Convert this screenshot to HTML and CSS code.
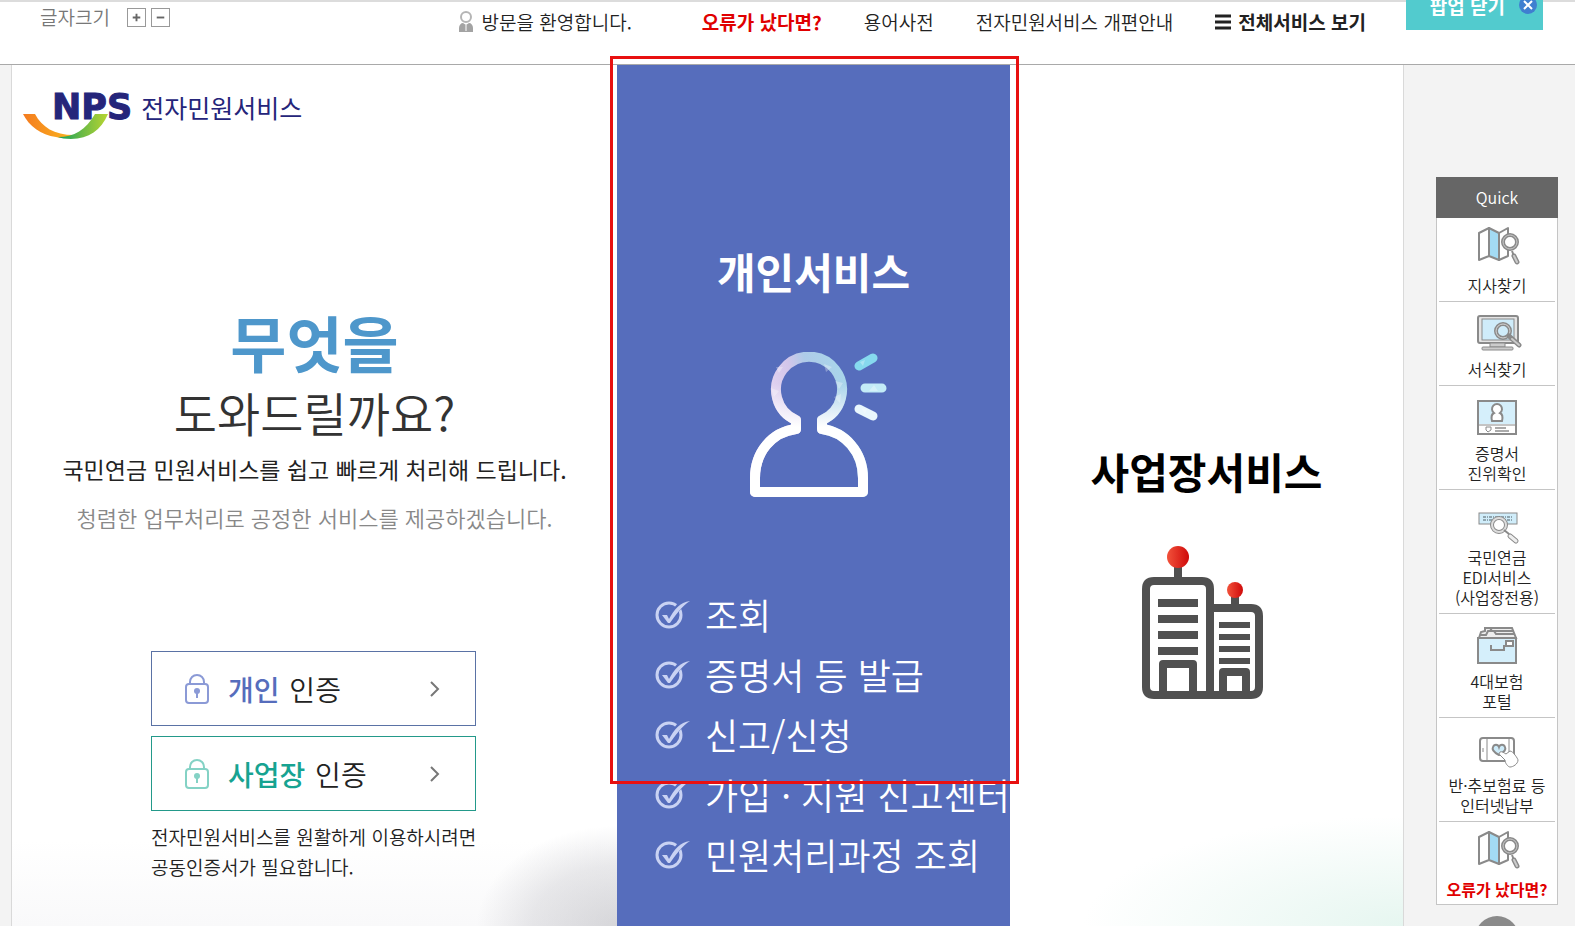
FILE: index.html
```
<!DOCTYPE html>
<html lang="ko">
    <head>
        <meta charset="utf-8">
        <title>NPS 전자민원서비스</title>
        <meta name="viewport" content="width=device-width, initial-scale=1">
        <link rel="stylesheet" href="styles.css">
    </head>
    <body>

        <!-- shared symbols -->
        <svg class="symbols" width="0" height="0">
            <symbol id="check" viewBox="0 0 36 30">
                <circle cx="14" cy="16" r="12" fill="none" stroke="#c9d2f3" stroke-width="3"/>
                <path d="M18 15 L27 4" stroke="#566dbc" stroke-width="6"/>
                <path d="M7 16 L12 16 L14 20 C19 11 25 3 35 2 C27 7 20 17 15 24 L13 24 Z" fill="#c9d2f3"/>
            </symbol>
            <symbol id="lock" viewBox="0 0 24 30">
                <rect x="1" y="10" width="22" height="19" rx="3" fill="none" stroke="currentColor" stroke-width="2"/>
                <path d="M5 10 V8 C5 4 8 1 12 1 C16 1 19 4 19 8 V10" fill="none" stroke="currentColor" stroke-width="2"/>
                <circle cx="12" cy="17" r="3" fill="currentColor"/>
                <path d="M12 18 V24" stroke="currentColor" stroke-width="2"/>
            </symbol>
            <symbol id="map" viewBox="0 0 50 57">
                <g fill="#fff" stroke="#8a8a8a" stroke-width="2" stroke-linejoin="round">
                    <path d="M7 15 L17 10 V38 L7 42 Z"/>
                    <path d="M17 10 L27 15 V42 L17 38 Z" fill="#a3dbf4"/>
                    <path d="M27 15 L36 10 V38 L27 42 Z"/>
                </g>
                <circle cx="38" cy="24" r="7" fill="#fff" stroke="#8a8a8a" stroke-width="4"/>
                <circle cx="38" cy="24" r="7" fill="none" stroke="#c9c9c9" stroke-width="1"/>
                <path d="M40 33 L42 38" stroke="#8a8a8a" stroke-width="2"/>
                <path d="M42 38 L45 44" stroke="#8a8a8a" stroke-width="5" stroke-linecap="round"/>
                <path d="M42 38 L45 44" stroke="#ccc" stroke-width="2" stroke-linecap="round"/>
            </symbol>
        </svg>

        <header class="top">
            <div class="fontsize">
                <span>글자크기</span>
                <button type="button" aria-label="글자 크게"><svg width="18" height="18" viewBox="0 0 18 18"><path d="M5 9 H13 M9 5 V13"/></svg></button>
                <button type="button" aria-label="글자 작게"><svg width="18" height="18" viewBox="0 0 18 18"><path d="M5 9 H13"/></svg></button>
            </div>
            <nav class="util">
                <p class="welcome">
                    <svg width="16" height="22" viewBox="0 0 16 22">
                        <circle cx="8" cy="6" r="5" fill="#fff" stroke="#b5b5b5" stroke-width="2"/>
                        <path d="M1 21 V17 C1 14 3 12 5 12 L8 14 L11 12 C13 12 15 14 15 17 V21 Z" fill="#a3a3a3"/>
                        <path d="M8 14 V20" stroke="#fff" stroke-width="1"/>
                    </svg>
                    방문을 환영합니다.
                </p>
                <a class="error" href="#">오류가 났다면?</a>
                <a href="#">용어사전</a>
                <a href="#">전자민원서비스 개편안내</a>
                <a class="all" href="#">
                    <svg width="16" height="16" viewBox="0 0 16 16"><path d="M0 2 H16 M0 8 H16 M0 14 H16" stroke="#222" stroke-width="3"/></svg>
                    전체서비스 보기
                </a>
            </nav>
            <button class="popup" type="button">팝업 닫기
                <svg width="18" height="18" viewBox="0 0 18 18">
                    <circle cx="9" cy="9" r="9" fill="#3f7fd0"/>
                    <path d="M5 5 L13 13 M13 5 L5 13" stroke="#fff" stroke-width="2"/>
                </svg>
            </button>
        </header>

        <div class="wrap">
            <main class="columns">
                <section class="intro">
                    <a class="logo" href="#">
                        <strong>NPS</strong>
                        <span>전자민원서비스</span>
                        <svg class="swoosh" width="86" height="28" viewBox="0 0 86 28">
                            <defs>
                                <linearGradient id="orange"><stop offset="0" stop-color="#f47b20"/><stop offset="1" stop-color="#fbb61c"/></linearGradient>
                                <linearGradient id="green"><stop offset="0" stop-color="#12a05a"/><stop offset=".5" stop-color="#6dbb45"/><stop offset="1" stop-color="#b9d531"/></linearGradient>
                            </defs>
                            <path d="M0 1 H12 C19 14 31 22 51 22 C45 25 39 26 33 24 C18 22 6 13 0 1 Z" fill="url(#orange)"/>
                            <path d="M72 1 H85 C78 17 66 26 48 26 C42 26 38 25 35 24 C51 24 63 17 72 1 Z" fill="url(#green)"/>
                        </svg>
                    </a>
                    <h1><strong>무엇을</strong> 도와드릴까요?</h1>
                    <p class="lead">국민연금 민원서비스를 쉽고 빠르게 처리해 드립니다.</p>
                    <p class="sub">청렴한 업무처리로 공정한 서비스를 제공하겠습니다.</p>
                    <div class="auth">
                        <a class="login person" href="#">
                            <svg class="lock" width="24" height="30"><use href="#lock"/></svg>
                            <span><b>개인</b> 인증</span>
                            <svg class="arrow" width="10" height="16" viewBox="0 0 10 16"><path d="M1 1 L8 8 L1 15"/></svg>
                        </a>
                        <a class="login company" href="#">
                            <svg class="lock" width="24" height="30"><use href="#lock"/></svg>
                            <span><b>사업장</b> 인증</span>
                            <svg class="arrow" width="10" height="16" viewBox="0 0 10 16"><path d="M1 1 L8 8 L1 15"/></svg>
                        </a>
                        <p class="note">전자민원서비스를 원활하게 이용하시려면<br>공동인증서가 필요합니다.</p>
                    </div>
                </section>

                <section class="personal">
                    <h2>개인서비스</h2>
                    <svg class="person-icon" width="140" height="146" viewBox="0 0 140 146">
                        <defs>
                            <linearGradient id="head" x1="0" y1=".3" x2="1" y2="0">
                                <stop offset="0" stop-color="#ecdcf5"/><stop offset=".35" stop-color="#d3c6ea"/><stop offset=".5" stop-color="#aecbe8"/><stop offset="1" stop-color="#a5dcec"/>
                            </linearGradient>
                            <linearGradient id="fade" x1="0" y1="0" x2="0" y2="1">
                                <stop offset=".2" stop-color="#fff" stop-opacity="0"/><stop offset=".52" stop-color="#fff"/>
                            </linearGradient>
                        </defs>
                        <g fill="none" stroke-width="10" stroke-linejoin="round">
                            <path d="M48 68 V77 C24 80 7 100 7 126 V140 H115 V126 C115 100 97 80 74 77 V68 A33 33 0 1 0 48 68 Z" stroke="url(#head)"/>
                            <path d="M48 68 V77 C24 80 7 100 7 126 V140 H115 V126 C115 100 97 80 74 77 V68 A33 33 0 1 0 48 68 Z" stroke="url(#fade)"/>
                        </g>
                        <g stroke-width="9" stroke-linecap="round">
                            <path d="M111 14 L125 6" stroke="#86d9ee"/>
                            <path d="M117 36 L134 36.1" stroke="#c3ebf7"/>
                            <path d="M111 57 L125 64" stroke="#e9f7fd"/>
                        </g>
                        <g fill="#fff" opacity=".3">
                            <path d="M121 39 L126 33 L130 39 Z M113 56 L119 57 L117 62 Z M112 10 L117 8 L115 14 Z"/>
                            <path d="M28 15 L35 15 L31 21 Z M76 12 L84 15 L78 20 Z M87 29 L95 31 L91 37 Z M23 36 L31 39 L26 45 Z M86 45 L93 42 L92 51 Z"/>
                        </g>
                    </svg>
                    <ul class="menu">
                        <li><svg width="36" height="30"><use href="#check"/></svg><a href="#">조회</a></li>
                        <li><svg width="36" height="30"><use href="#check"/></svg><a href="#">증명서 등 발급</a></li>
                        <li><svg width="36" height="30"><use href="#check"/></svg><a href="#">신고/신청</a></li>
                        <li><svg width="36" height="30"><use href="#check"/></svg><a href="#">가입 · 지원 신고센터</a></li>
                        <li><svg width="36" height="30"><use href="#check"/></svg><a href="#">민원처리과정 조회</a></li>
                    </ul>
                    <span class="highlight"></span>
                </section>

                <section class="business">
                    <h2>사업장서비스</h2>
                    <svg width="122" height="154" viewBox="0 0 122 154">
                        <defs>
                            <linearGradient id="red"><stop offset="0" stop-color="#f2523b"/><stop offset="1" stop-color="#cf0a0a"/></linearGradient>
                        </defs>
                        <g fill="none" stroke="#505050" stroke-width="8">
                            <path d="M36 20 V34 M93 50 V62"/>
                            <path d="M68 149 V43 Q68 35 60 35 H12 Q4 35 4 43 V141 Q4 149 12 149 H109 Q117 149 117 141 V70 Q117 62 109 62 H68"/>
                            <path d="M21 149 V118 H51 V149 M81 149 V126 H104 V149" stroke-linejoin="round"/>
                            <path d="M16 57 H56 M16 73 H56 M16 89 H56 M16 105 H56"/>
                            <path d="M77 79 H108 M77 91 H108 M77 103 H108 M77 115 H108" stroke-width="6"/>
                        </g>
                        <circle cx="36" cy="11" r="11" fill="url(#red)"/>
                        <circle cx="93" cy="44" r="8" fill="url(#red)"/>
                    </svg>
                </section>
            </main>

            <aside class="side">
                <nav class="quick">
                    <h3>Quick</h3>
                    <ul>
                        <li><a href="#"><svg width="50" height="57"><use href="#map"/></svg>지사찾기</a></li>
                        <li><a href="#">
                            <svg width="50" height="57" viewBox="0 0 50 57">
                                <rect x="6" y="14" width="40" height="27" rx="2" fill="#e4e4e4" stroke="#8a8a8a" stroke-width="2"/>
                                <rect x="10" y="17" width="32" height="21" fill="#cfecfa" stroke="#8a8a8a"/>
                                <path d="M18 41 H33 V45 H18 Z" fill="#ccc" stroke="#8a8a8a"/>
                                <rect x="10" y="45" width="31" height="3" rx="1" fill="#ccc" stroke="#8a8a8a"/>
                                <circle cx="31" cy="29" r="7" fill="#cfecfa" stroke="#8a8a8a" stroke-width="4"/>
                                <circle cx="31" cy="29" r="7" fill="none" stroke="#d5d5d5" stroke-width="1"/>
                                <path d="M37 34 L47 43" stroke="#8a8a8a" stroke-width="5" stroke-linecap="round"/>
                                <path d="M40 37 L47 43" stroke="#ccc" stroke-width="2" stroke-linecap="round"/>
                            </svg>서식찾기</a></li>
                        <li><a href="#">
                            <svg width="50" height="57" viewBox="0 0 50 57">
                                <rect x="6" y="15" width="38" height="33" fill="#fff" stroke="#8a8a8a" stroke-width="2"/>
                                <rect x="7" y="16" width="36" height="22" fill="#d5effb"/>
                                <path d="M7 39 H43" stroke="#8a8a8a"/>
                                <path d="M22 27 A5 5 0 1 1 28 27 C30 28 31 31 30 35 H20 C19 31 20 28 22 27 Z" fill="#fff" stroke="#8a8a8a" stroke-width="2"/>
                                <path d="M14 41 H19 V44 L16 46 L14 44 Z" fill="none" stroke="#8a8a8a" stroke-width="1"/>
                                <path d="M23 42 H34 M23 45 H37" stroke="#aaa" stroke-width="2"/>
                            </svg>증명서<br>진위확인</a></li>
                        <li><a href="#">
                            <svg width="50" height="57" viewBox="0 0 50 57">
                                <rect x="7" y="23" width="38" height="11" fill="#d0edfa" stroke="#8a8a8a"/>
                                <path d="M11 27 H41 M11 30 H41" stroke="#8fa5af" stroke-width="2" stroke-dasharray="3 1 1 1"/>
                                <circle cx="27" cy="35" r="7" fill="#fff" stroke="#8a8a8a" stroke-width="4"/>
                                <circle cx="27" cy="35" r="7" fill="none" stroke="#ddd" stroke-width="2"/>
                                <path d="M32 40 L37 44" stroke="#8a8a8a" stroke-width="2"/>
                                <path d="M38 46 L44 51" stroke="#8a8a8a" stroke-width="5" stroke-linecap="round"/>
                                <path d="M38 46 L44 51" stroke="#eee" stroke-width="3" stroke-linecap="round"/>
                            </svg>국민연금<br>EDI서비스<br>(사업장전용)</a></li>
                        <li><a href="#">
                            <svg width="50" height="57" viewBox="0 0 50 57">
                                <path d="M7 24 L9 18 L13 17 V14 H40 L44 24 Z" fill="#eee" stroke="#8a8a8a" stroke-width="2"/>
                                <path d="M8 21 H14 L16 17 H22 L24 20 H42 M18 14 L20 17 H41" fill="none" stroke="#8a8a8a" stroke-width="2"/>
                                <rect x="6" y="24" width="38" height="25" fill="#d5effb" stroke="#8a8a8a" stroke-width="2"/>
                                <path d="M19 31 V36 H32 V31" fill="none" stroke="#8a8a8a" stroke-width="2"/>
                                <rect x="34" y="27" width="7" height="5" fill="#fff" stroke="#8a8a8a" stroke-width="2"/>
                            </svg>4대보험<br>포털</a></li>
                        <li><a href="#">
                            <svg width="50" height="57" viewBox="0 0 50 57">
                                <rect x="8" y="20" width="34" height="23" rx="3" fill="#fff" stroke="#8a8a8a" stroke-width="2"/>
                                <path d="M15 20 V43 M37 20 V38 M11 30 V34" stroke="#8a8a8a" stroke-width="1"/>
                                <path d="M27 37 C21 34 20 31 21 29 C22 26 26 26 27 29 C28 26 32 26 33 29 C34 31 33 34 27 37 Z" fill="#cdebf9" stroke="#8a8a8a" stroke-width="2"/>
                                <path d="M28 34 C30 33 32 35 34 36 L38 33 C41 33 46 41 46 42 C46 46 41 49 38 49 C36 49 33 45 33 42 L28 37 C27 36 27 35 28 34 Z" fill="#fff" stroke="#8a8a8a" stroke-width="1"/>
                            </svg>반·추보험료 등<br>인터넷납부</a></li>
                        <li class="error"><a href="#"><svg width="50" height="57"><use href="#map"/></svg>오류가 났다면?</a></li>
                    </ul>
                </nav>
                <button class="totop" type="button" aria-label="위로"></button>
            </aside>
        </div>
    </body>
</html>
```
FILE: styles.css
```
* {
    box-sizing: border-box;
}

html {
    height: 100%;
    overflow: hidden;
}

body {
    margin: 0;
    height: 100%;
    display: flex;
    flex-direction: column;
    overflow: hidden;
    background: #f3f3f3;
    color: #222;
    font-family: "Noto Sans CJK KR", "Noto Sans", sans-serif;
    font-weight: 350;
}

a {
    color: inherit;
    text-decoration: none;
}

h1, h2, h3, p, ul {
    margin: 0;
    padding: 0;
}

ul {
    list-style: none;
}

button {
    font-family: inherit;
    border: 0;
    padding: 0;
    cursor: pointer;
}

svg {
    flex: none;
}

.symbols {
    position: absolute;
}

/* top bar */
.top {
    flex: none;
    display: flex;
    align-items: flex-start;
    height: 65px;
    padding: 0 32px 0 40px;
    overflow: hidden;
    background: #fff;
    border-bottom: 1px solid #a9a9a9;
    box-shadow: inset 0 2px 0 #dcdcdc;
    font-size: 19px;
    line-height: 32px;
}

.fontsize {
    display: flex;
    align-items: center;
    gap: 5px;
    margin-top: 1px;
    color: #777;
}

.fontsize span {
    margin-right: 12px;
}

.fontsize button {
    display: flex;
    background: #fff;
    border: 1px solid #999;
}

.fontsize svg {
    width: 17px;
    height: 17px;
    stroke: #666;
    stroke-width: 2;
}

.util {
    display: flex;
    gap: 42px;
    margin: 6px 40px 0 auto;
}

.welcome, .all {
    display: flex;
    align-items: center;
    gap: 7px;
}

.welcome {
    margin-right: 28px;
}

.all {
    font-weight: 700;
}

.error {
    color: #e00000;
    font-weight: 700;
}

.popup {
    display: flex;
    align-items: center;
    justify-content: flex-end;
    gap: 14px;
    width: 137px;
    height: 50px;
    margin-top: -20px;
    padding-right: 6px;
    background: #52cbce;
    color: #fff;
    font-size: 19px;
    font-weight: 700;
}

/* page */
.wrap {
    flex: 1;
    display: flex;
    min-height: 0;
}

.columns {
    flex: 1;
    display: grid;
    grid-template-columns: 605fr 393fr 393fr;
    margin-left: 11px;
    border: solid #d9d9d9;
    border-width: 0 1px;
    background: #fff;
}

.intro {
    display: flex;
    flex-direction: column;
    align-items: center;
    text-align: center;
    background:
        radial-gradient(ellipse 140px 100px at 100% 100%, rgba(150, 150, 158, .35), rgba(170, 170, 178, .25) 60%, transparent),
        linear-gradient(transparent 90%, #f9f9fa);
}

.logo {
    position: relative;
    align-self: flex-start;
    display: flex;
    align-items: center;
    gap: 9px;
    margin: 22px 0 0 40px;
    line-height: 36px;
    color: #25257a;
}

.logo strong {
    font-family: "DejaVu Sans", sans-serif;
    font-size: 35px;
    font-weight: 700;
    line-height: 40px;
    -webkit-text-stroke: 1px #25257a;
}

.logo span {
    font-size: 25px;
    font-weight: 400;
}

.swoosh {
    position: absolute;
    left: -29px;
    top: 26px;
}

.intro h1 {
    margin-top: 175px;
    font-size: 47px;
    font-weight: 350;
    line-height: 60px;
    color: #333;
}

.intro h1 strong {
    display: block;
    font-size: 61px;
    line-height: 80px;
    font-weight: 700;
    color: #4e97cb;
}

.lead {
    margin-top: 9px;
    font-size: 23px;
    font-weight: 400;
    line-height: 36px;
}

.sub {
    margin-top: 12px;
    font-size: 22px;
    line-height: 36px;
    color: #888;
}

.auth {
    display: flex;
    flex-direction: column;
    gap: 10px;
    width: 325px;
    margin: 116px 2px 0 0;
    text-align: left;
}

.login {
    display: flex;
    align-items: center;
    height: 75px;
    padding: 0 35px 0 33px;
    border: 1px solid;
    background: #fff;
    font-size: 28px;
}

.login span {
    color: #222;
    margin-left: 19px;
}

.person {
    border-color: #5a72a5;
    color: #8b9ad6;
}

.person b {
    color: #566dbc;
}

.company {
    border-color: #23998a;
    color: #84d2c5;
}

.company b {
    color: #17a391;
}

.login b {
    margin-right: 2px;
    font-weight: 500;
}

.arrow {
    margin-left: auto;
    fill: none;
    stroke: #777;
    stroke-width: 2;
}

.note {
    padding-top: 1px;
    font-size: 19px;
    line-height: 30px;
    white-space: nowrap;
}

h2 {
    font-size: 42px;
    font-weight: 700;
    line-height: 60px;
}

.personal {
    position: relative;
    display: flex;
    flex-direction: column;
    align-items: center;
    padding-top: 176px;
    background: #566dbc;
    color: #fff;
}

.person-icon {
    margin: 51px 0 0 8px;
}

.menu {
    align-self: stretch;
    margin-top: 86px;
    padding-left: 38px;
    font-size: 36px;
    line-height: 60px;
    white-space: nowrap;
}

.menu li {
    display: flex;
    align-items: center;
    gap: 14px;
}

/* frame laid over the personal column */
.highlight {
    position: absolute;
    top: -9px;
    left: -7px;
    right: -9px;
    height: 728px;
    border: 3px solid #e81010;
}

.business {
    display: flex;
    flex-direction: column;
    align-items: center;
    gap: 45px;
    padding-top: 376px;
    background: radial-gradient(ellipse 320px 110px at 100% 100%, #e6f6f0, transparent);
    color: #000;
}

.business svg {
    margin-right: 8px;
}

/* quick menu */
.side {
    flex: none;
    display: flex;
    flex-direction: column;
    align-items: center;
    width: 171px;
    padding: 112px 0 0 15px;
}

.quick {
    width: 122px;
    font-size: 16px;
    line-height: 20px;
    text-align: center;
}

.quick h3 {
    background: #666;
    color: #fff;
    font-size: 16px;
    font-weight: 350;
    line-height: 41px;
}

.quick ul {
    padding: 0 2px;
    background: #fff;
    border: 1px solid #c5c5c5;
    border-top: 0;
}

.quick li {
    padding-bottom: 6px;
    border-bottom: 1px solid #c5c5c5;
    white-space: nowrap;
}

.quick li:last-child {
    padding-bottom: 5px;
    border-bottom: 0;
}

.quick svg {
    display: block;
    margin: 0 auto;
}

.totop {
    flex: none;
    width: 44px;
    height: 44px;
    margin-top: 11px;
    border-radius: 50%;
    background: #8a8a8a;
}
```
